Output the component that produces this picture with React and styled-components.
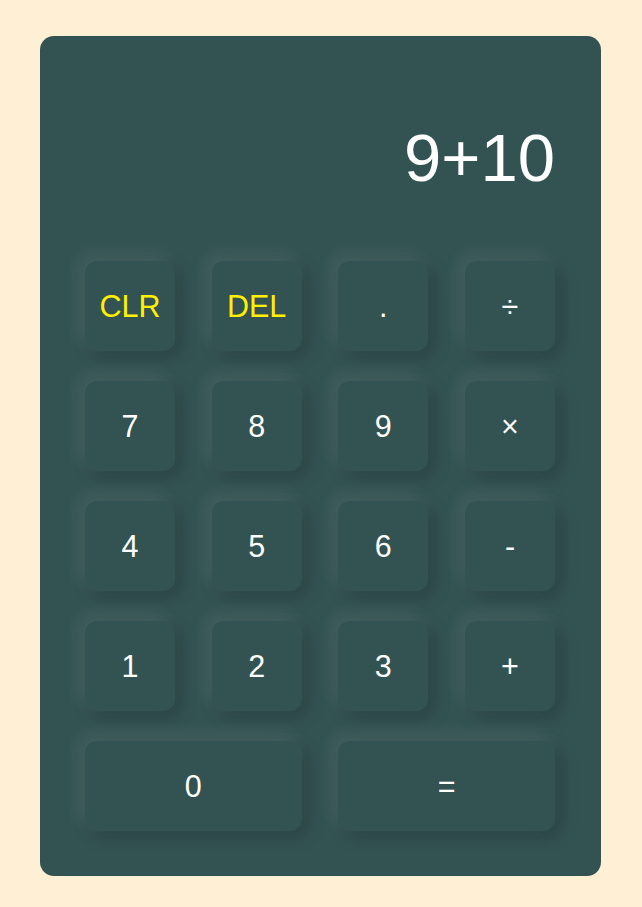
import React from "react";
import styled, { createGlobalStyle } from "styled-components";

const GlobalStyle = createGlobalStyle`
  body {
    margin: 0;
    background: #ffefd5;
    font-family: "Liberation Sans", Arial, sans-serif;
  }
`;

const keys = [
  { id: "clr", label: "CLR", accent: true },
  { id: "del", label: "DEL", accent: true },
  { id: "dot", label: "." },
  { id: "div", label: "÷" },
  { id: "7", label: "7" },
  { id: "8", label: "8" },
  { id: "9", label: "9" },
  { id: "mul", label: "×" },
  { id: "4", label: "4" },
  { id: "5", label: "5" },
  { id: "6", label: "6" },
  { id: "sub", label: "-" },
  { id: "1", label: "1" },
  { id: "2", label: "2" },
  { id: "3", label: "3" },
  { id: "add", label: "+" },
  { id: "0", label: "0", wide: true },
  { id: "eq", label: "=", wide: true },
];

const App = () => {
  return (
    <>
      <GlobalStyle />
      <PageStyled>
        <CalculatorStyled>
          <DisplayStyled>9+10</DisplayStyled>
          <KeypadStyled>
            {keys.map((key) => (
              <KeyStyled key={key.id} $accent={key.accent} $wide={key.wide}>
                {key.label}
              </KeyStyled>
            ))}
          </KeypadStyled>
        </CalculatorStyled>
      </PageStyled>
    </>
  );
};

const PageStyled = styled.div`
  display: flex;
  justify-content: flex-start;
  padding: 36px 41px 31px 40px;
`;

const CalculatorStyled = styled.div`
  box-sizing: border-box;
  width: 561px;
  height: 840px;
  padding: 45px 46px 45px 45px;
  background: #335352;
  border-radius: 14px;
  display: flex;
  flex-direction: column;
`;

const DisplayStyled = styled.div`
  box-sizing: border-box;
  height: 180px;
  padding-top: 38px;
  text-align: right;
  color: #ffffff;
  font-size: 67px;
  line-height: normal;
`;

const KeypadStyled = styled.div`
  display: grid;
  grid-template-columns: repeat(4, 90px);
  grid-auto-rows: 90px;
  column-gap: 36.67px;
  row-gap: 30px;
`;

const KeyStyled = styled.button`
  grid-column: ${(p) => (p.$wide ? "span 2" : "auto")};
  display: flex;
  align-items: center;
  justify-content: center;
  border: none;
  border-radius: 12px;
  background: #335352;
  color: ${(p) => (p.$accent ? "#fff000" : "#ffffff")};
  font-family: "Liberation Sans", Arial, sans-serif;
  font-size: 30.5px;
  padding: 0;
  box-shadow: -6px -6px 18px rgba(255, 255, 255, 0.09),
    6px 6px 18px rgba(0, 0, 0, 0.2);
  cursor: pointer;
`;

export default App;
